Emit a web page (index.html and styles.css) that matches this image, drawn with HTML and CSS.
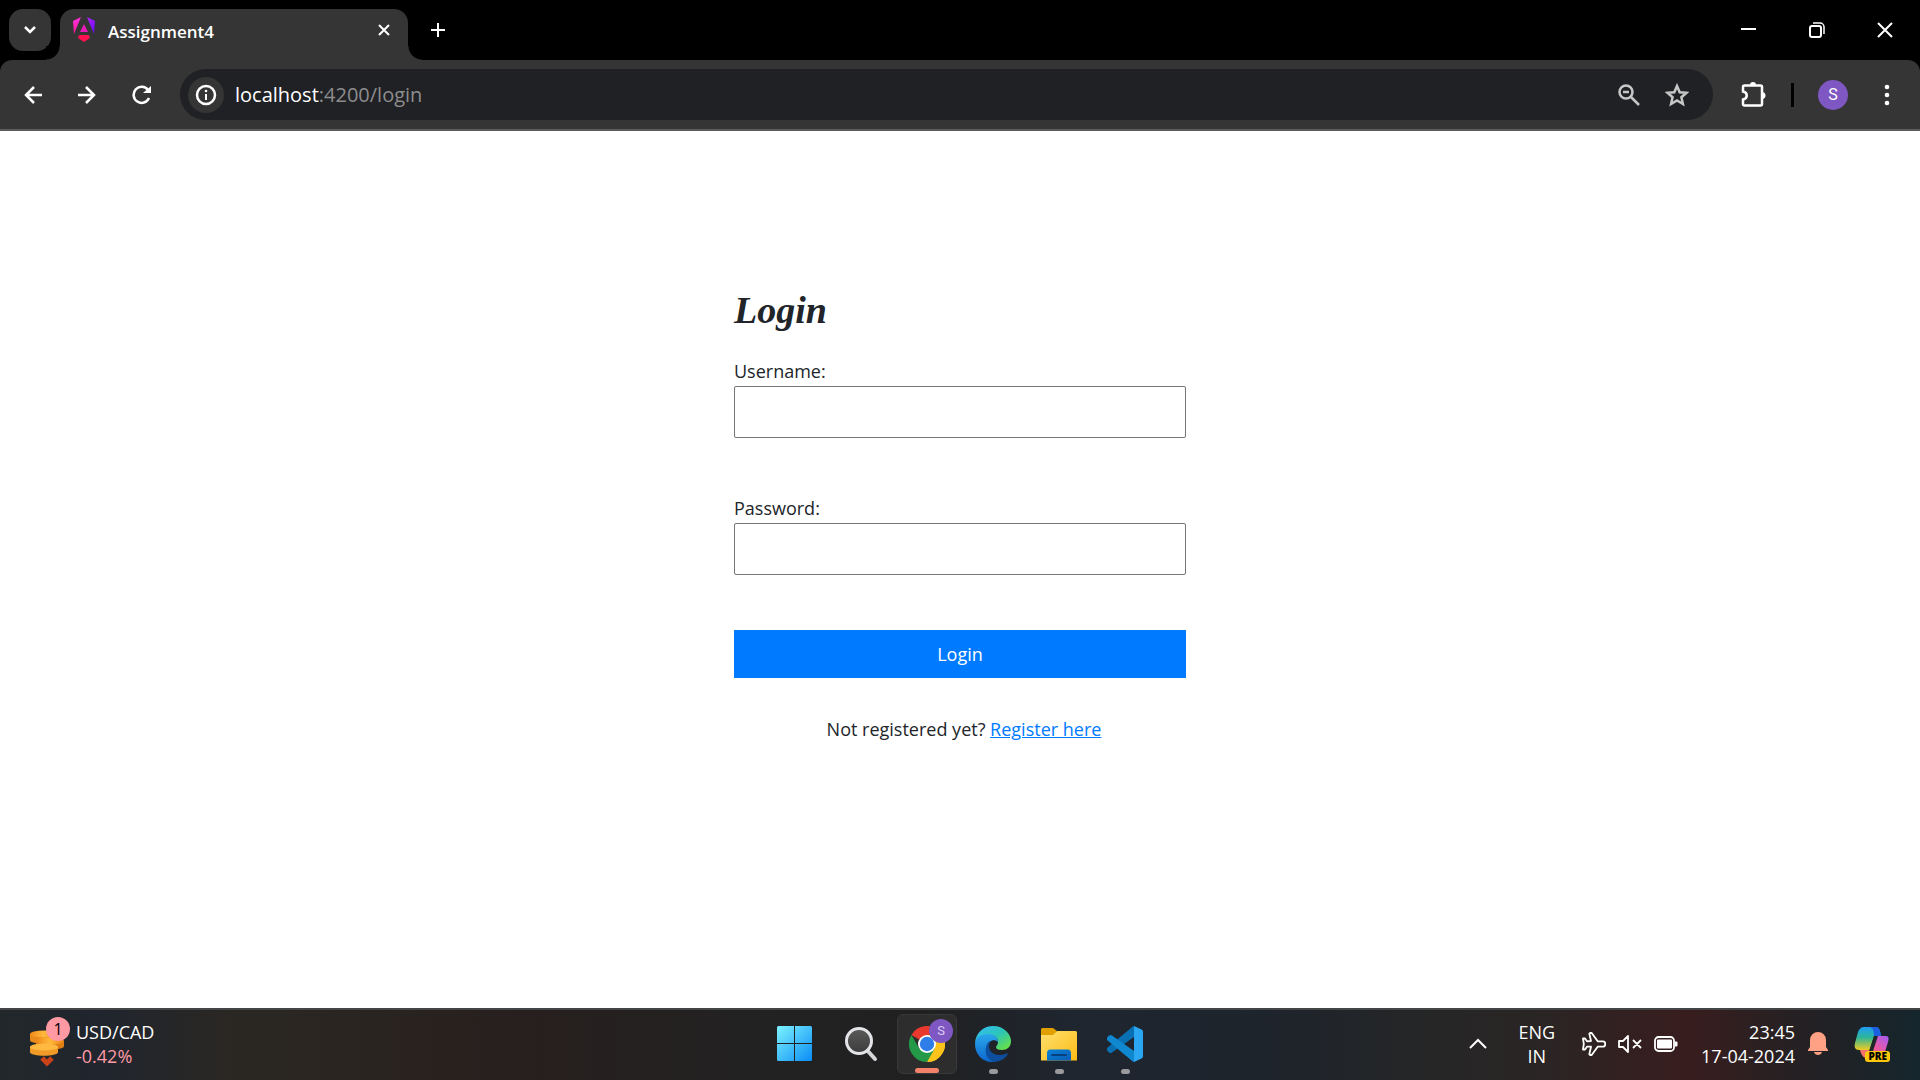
FILE: index.html
```html
<!DOCTYPE html>
<html lang="en">
<head>
<meta charset="utf-8">
<title>Assignment4</title>
<link rel="stylesheet" href="styles.css">
</head>
<body>
<svg width="0" height="0" class="defs" aria-hidden="true">
  <defs>
    <linearGradient id="ngLeft" x1="0" y1="0" x2="0" y2="1"><stop offset="0" stop-color="#ff2fe0"/><stop offset="1" stop-color="#ff1a9a"/></linearGradient>
    <linearGradient id="ngRight" x1="0" y1="0" x2="1" y2="1"><stop offset="0" stop-color="#c020ff"/><stop offset="1" stop-color="#5a0cf0"/></linearGradient>
    <linearGradient id="win" x1="0" y1="0" x2="1" y2="1"><stop offset="0" stop-color="#7df3ff"/><stop offset="1" stop-color="#0a8df5"/></linearGradient>
    <linearGradient id="lens" x1="0" y1="0" x2="0" y2="1"><stop offset="0" stop-color="#5a5a5a"/><stop offset="1" stop-color="#3c3c3c"/></linearGradient>
    <linearGradient id="edgeTop" x1="0" y1="0" x2="1" y2="1"><stop offset="0.1" stop-color="#35bdf0"/><stop offset="0.5" stop-color="#2cc5b5"/><stop offset="0.9" stop-color="#67e04a"/></linearGradient>
    <linearGradient id="edgeSide" x1="0" y1="0" x2="0" y2="1"><stop offset="0" stop-color="#2aa8ec"/><stop offset="1" stop-color="#0c66cc"/></linearGradient>
    <linearGradient id="folder" x1="0" y1="0" x2="1" y2="1"><stop offset="0" stop-color="#ffdf70"/><stop offset="1" stop-color="#fbbc14"/></linearGradient>
    <linearGradient id="dock" x1="0" y1="0" x2="1" y2="1"><stop offset="0" stop-color="#0a84d8"/><stop offset="1" stop-color="#0a5cb4"/></linearGradient>
    <linearGradient id="coin" x1="0" y1="0" x2="1" y2="0"><stop offset="0" stop-color="#f08a18"/><stop offset="0.5" stop-color="#ffb83c"/><stop offset="1" stop-color="#e88416"/></linearGradient>
    <linearGradient id="copA" x1="0" y1="0" x2="0" y2="1"><stop offset="0" stop-color="#1f9cf5"/><stop offset="0.45" stop-color="#2cb59a"/><stop offset="1" stop-color="#f0cc20"/></linearGradient>
    <linearGradient id="copB" x1="1" y1="0" x2="0" y2="1"><stop offset="0" stop-color="#a45cf5"/><stop offset="0.5" stop-color="#ee5aa0"/><stop offset="1" stop-color="#ff7a50"/></linearGradient>
  </defs>
</svg>

<header class="tabstrip">
  <button class="tab-search" aria-label="Search tabs"><svg width="14" height="10" viewBox="0 0 14 10"><path d="M2 2l5 5 5-5" class="ln w25"/></svg></button>
  <div class="tab">
    <svg width="24" height="26" viewBox="0 0 24 26">
      <path d="M1 4L9 0 2 17z" fill="url(#ngLeft)"/><path d="M23 4L15 0l7 17z" fill="url(#ngRight)"/>
      <path d="M12 7l4 8H8z" fill="#e81ab8"/><path d="M7 18h10l1 3-6 4-6-4z" fill="#ff1050"/>
    </svg>
    <span class="tab-title">Assignment4</span>
    <button class="icon-btn" aria-label="Close tab"><svg width="14" height="14" viewBox="0 0 14 14"><path d="M2 2l10 10M12 2L2 12" class="ln w2"/></svg></button>
  </div>
  <button class="icon-btn new-tab" aria-label="New tab"><svg width="16" height="16" viewBox="0 0 16 16"><path d="M8 1v14M1 8h14" class="ln w2"/></svg></button>
  <div class="window-controls">
    <button class="icon-btn" aria-label="Minimise"><svg width="16" height="16" viewBox="0 0 16 16"><path d="M0 7h15" class="ln w2"/></svg></button>
    <button class="icon-btn" aria-label="Restore"><svg width="16" height="16" viewBox="0 0 16 16"><rect x="1" y="4" width="11" height="11" rx="2" class="ln w2"/><path d="M4 1h7a4 4 0 0 1 4 4v7" class="ln w1"/></svg></button>
    <button class="icon-btn" aria-label="Close"><svg width="16" height="16" viewBox="0 0 16 16"><path d="M1 1l14 14M15 1L1 15" class="ln w2"/></svg></button>
  </div>
</header>

<nav class="toolbar">
  <button class="icon-btn" aria-label="Back"><svg width="18" height="18" viewBox="0 0 18 18"><path d="M18 9H2M10 1L2 9l8 8" class="ln w25"/></svg></button>
  <button class="icon-btn" aria-label="Forward"><svg width="18" height="18" viewBox="0 0 18 18"><path d="M0 9h16M8 1l8 8-8 8" class="ln w25"/></svg></button>
  <button class="icon-btn" aria-label="Reload"><svg width="20" height="20" viewBox="0 0 20 20"><path d="M17 13a8 8 0 1 1-1-8l2 2" class="ln w25"/><path d="M19 1v7h-8z" fill="#fff"/></svg></button>
  <div class="address">
    <button class="site-info" aria-label="Site information"><svg width="22" height="22" viewBox="0 0 22 22"><circle cx="11" cy="11" r="9" class="ln w25"/><path d="M11 10v6" class="ln w2"/><circle cx="11" cy="7" r="1.3" fill="#fff"/></svg></button>
    <div class="url"><span class="host">localhost</span>:4200/login</div>
    <button class="icon-btn" aria-label="Zoom"><svg width="22" height="22" viewBox="0 0 22 22"><circle cx="8" cy="8" r="6.5" class="ln w25 grey"/><path d="M5 8h6M13 13l8 8" class="ln w25 grey"/></svg></button>
    <button class="icon-btn" aria-label="Bookmark"><svg width="24" height="24" viewBox="0 0 24 24"><path d="M12 3l2.700 6.200 6.800.6-5.100 4.500 1.500 6.700-5.900-3.500L6.100 21l1.500-6.700-5.100-4.500 6.800-.6z" class="ln w25 grey"/></svg></button>
  </div>
  <button class="icon-btn" aria-label="Extensions"><svg width="26" height="26" viewBox="0 0 26 26"><path d="M3.500 3.500h16a1.500 1.500 0 0 1 1.500 1.500v17a1.500 1.500 0 0 1-1.500 1.500h-16A1.500 1.500 0 0 1 2 22v-4.500c5-1 5-7 0-8V5a1.500 1.500 0 0 1 1.500-1.500z" class="ln w25"/><path d="M9 3a3 3 0 0 1 6 0zM21 10a3 3 0 0 1 0 7z" fill="#fff"/></svg></button>
  <span class="divider"></span>
  <button class="avatar" aria-label="Profile">S</button>
  <button class="icon-btn" aria-label="Menu"><svg width="6" height="22" viewBox="0 0 6 22"><g fill="#fff"><circle cx="3" cy="3" r="2.300"/><circle cx="3" cy="11" r="2.300"/><circle cx="3" cy="19" r="2.300"/></g></svg></button>
</nav>

<main class="page">
  <form class="login">
    <h1>Login</h1>
    <div class="field"><label for="user">Username:</label><input id="user" type="text"></div>
    <div class="field"><label for="pass">Password:</label><input id="pass" type="password"></div>
    <button class="submit" type="button">Login</button>
    <p class="register">Not registered yet? <a href="#register">Register here</a></p>
  </form>
</main>

<footer class="taskbar">
  <button class="widget" aria-label="Widgets">
    <span class="coins">
      <svg width="40" height="46" viewBox="0 0 40 46">
        <path d="M0 13v6c0 5 28 5 28 0v-6z" fill="#e88a1c"/><ellipse cx="14" cy="13" rx="14" ry="3.500" fill="url(#coin)"/>
        <path d="M6 20v5c0 5 28 5 28 0v-5z" fill="#e07c14"/><ellipse cx="20" cy="20" rx="14" ry="3.500" fill="url(#coin)"/>
        <path d="M0 26v5c0 5 28 5 28 0v-5z" fill="#f09a28"/><ellipse cx="14" cy="26" rx="14" ry="3.500" fill="#ffb840"/>
        <path d="M12 37l5 5 5-5" fill="none" stroke="#c9421a" stroke-width="5"/>
      </svg>
      <span class="badge">1</span>
    </span>
    <span class="quote"><span>USD/CAD</span><span class="down">-0.42%</span></span>
  </button>

  <div class="apps">
    <button class="app" aria-label="Start"><svg width="36" height="36" viewBox="0 0 36 36"><path d="M1.500 0H17v17H0V1.500A1.500 1.500 0 0 1 1.500 0zM18 0h15.500A1.500 1.500 0 0 1 35 1.500V17H18zM0 18h17v17H1.500A1.500 1.500 0 0 1 0 33.500zM18 18h17v15.500a1.500 1.500 0 0 1-1.500 1.500H18z" fill="url(#win)"/></svg></button>
    <button class="app" aria-label="Search"><svg width="36" height="36" viewBox="0 0 36 36"><path d="M23 23l9 10" stroke="#d4d6da" stroke-width="4" stroke-linecap="round"/><circle cx="16" cy="15" r="12.500" fill="url(#lens)" stroke="#e2e4e8" stroke-width="3"/></svg></button>
    <button class="app active" aria-label="Chrome">
      <svg width="36" height="36" viewBox="0 0 36 36">
        <path d="M18 18L2.400 9A18 18 0 0 1 33.600 9z" fill="#e8392c"/><path d="M18 18L33.600 9A18 18 0 0 1 18 36l4-13z" fill="#fcc31a"/><path d="M18 9h15.600A18 18 0 0 1 18 36l7.800-13.500z" fill="#fcc31a"/><path d="M18 36A18 18 0 0 1 2.400 9l7.800 13.500L18 27l7.800-4.500z" fill="#249a48"/><circle cx="18" cy="18" r="9" fill="#fff"/><circle cx="18" cy="18" r="7.200" fill="#2f7de9"/>
      </svg>
      <span class="profile-badge">S</span>
    </button>
    <button class="app open" aria-label="Edge">
      <svg width="36" height="36" viewBox="0 0 36 36">
        <path d="M0 17C1 6 9 0 18 0c11 0 18 8 18 15 0 6-4 9-9 9-4 0-6-1-6-3 0-1 2-2 2-5 0-4-3-7-8-7C7 9 1 13 0 17z" fill="url(#edgeTop)"/>
        <path d="M0 18C0 12 6 8 13 8c7 0 10 4 10 8-4-4-10-1-10 5 0 6 5 11 11 12-3 2-5 3-7 3C7 36 0 28 0 18z" fill="url(#edgeSide)"/>
        <path d="M15 15c-6 3-7 19 5 21 7-1 12-5 13-9-8 4-19 2-19-7z" fill="#0d4f9e"/>
      </svg>
    </button>
    <button class="app open" aria-label="File Explorer">
      <svg width="36" height="36" viewBox="0 0 36 36"><path d="M0 3.500A1.500 1.500 0 0 1 1.500 2H12l4 3-3 4H0z" fill="#e0a000"/><path d="M0 9h12l4-4h18.500A1.500 1.500 0 0 1 36 6.500V34.500H0z" fill="url(#folder)"/><path d="M6 34.500V27a3.500 3.500 0 0 1 3.500-3.500h17A3.500 3.500 0 0 1 30 27v7.500z" fill="url(#dock)"/><path d="M11 29h14" stroke="#06407f" stroke-width="2" stroke-linecap="round"/></svg>
    </button>
    <button class="app open" aria-label="Visual Studio Code">
      <svg width="36" height="36" viewBox="0 0 36 36"><path d="M27 0v11L5 26.500a2.500 2.500 0 0 1-3 0L.6 25a2.500 2.500 0 0 1 0-3.500L25.500.7z" fill="#0a70b4"/><path d="M27 36V25L5 9.500a2.500 2.500 0 0 0-3 0L.6 11a2.500 2.500 0 0 0 0 3.500l24.900 20.800z" fill="#1088cf"/><path d="M27 0l7.500 3.500A2.500 2.500 0 0 1 36 6v24a2.500 2.500 0 0 1-1.500 2.500L27 36z" fill="#2aa6f2"/></svg>
    </button>
  </div>

  <div class="tray">
    <button class="icon-btn" aria-label="Hidden icons"><svg width="18" height="12" viewBox="0 0 18 12"><path d="M1 10l8-8 8 8" class="ln w2"/></svg></button>
    <button class="lang">ENG<br>IN</button>
    <button class="status" aria-label="Network, sound, battery">
      <svg width="24" height="24" viewBox="0 0 24 24"><path d="M9 9L7.500 2.500A1 1 0 0 1 8.500 1h1.200l6 8.300H21c3 0 3 5.400 0 5.400h-5.300L9.700 23H8.500a1 1 0 0 1-1-1.500L9 14.700H5L3 17.500H1l.8-5.500L1 6.500h2L5 9.300z" class="ln w15"/></svg>
      <svg width="24" height="18" viewBox="0 0 24 18"><path d="M1 6h4l5-5v16l-5-5H1zM15 5l8 8M23 5l-8 8" class="ln w15"/></svg>
      <svg width="24" height="16" viewBox="0 0 24 16"><rect x="1" y="1" width="19" height="14" rx="3.500" class="ln w15"/><rect x="3" y="3.500" width="15" height="9" rx="1" fill="#fff"/><path d="M21 5.500h1.500a1 1 0 0 1 1 1v3a1 1 0 0 1-1 1H21z" fill="#fff"/></svg>
    </button>
    <button class="clock">23:45<br>17-04-2024</button>
    <button class="icon-btn" aria-label="Notifications"><svg width="20" height="24" viewBox="0 0 20 24"><path d="M10 0a8 8 0 0 1 8 8v7l2 3v1H0v-1l2-3V8a8 8 0 0 1 8-8zM6 20h8c-1 4-7 4-8 0z" fill="#ffa184"/></svg></button>
    <button class="copilot" aria-label="Copilot">
      <svg width="36" height="34" viewBox="0 0 36 34"><path d="M10 0h12c3 0 4 3 5 9h-7l-4 14H5c-4 0-5-3-4-7L4 5c1-3 3-5 6-5z" fill="url(#copA)"/><path d="M16 0h6c3 0 4 3 5 9h-7c0-5-1-8-4-9z" fill="#1d5fe0"/><path d="M21 9h11c3 0 3 3 2 6l-3 10c-1 3-3 6-7 6H12c-3 0-5-4-6-8h10c2 0 3-2 4-6z" fill="url(#copB)"/><path d="M20 9h4l-5 15h-4z" fill="#20272b"/></svg>
      <span class="pre">PRE</span>
    </button>
  </div>
</footer>
</body>
</html>
```
FILE: styles.css
```css
* { box-sizing: border-box; }

body {
  margin: 0;
  min-height: 100vh;
  display: flex;
  flex-direction: column;
  background: #000;
  color: #212529;
  font-family: "Open Sans", "Noto Sans", sans-serif;
  font-size: 18px;
}

button {
  margin: 0;
  padding: 0;
  border: 0;
  background: none;
  color: #fff;
  font: inherit;
}

svg { display: block; flex: none; }
.defs { position: absolute; }

/* icon strokes */
.ln { fill: none; stroke: #fff; }
.ln.grey { stroke: #c7c7c7; }
.w1 { stroke-width: 1.5; }
.w15 { stroke-width: 1.8; stroke-linejoin: round; }
.w2 { stroke-width: 2; }
.w25 { stroke-width: 2.5; }

.icon-btn { display: grid; place-items: center; }

/* tab strip */
.tabstrip {
  display: flex;
  height: 60px;
  padding: 9px 27px 0 9px;
  color: #fff;
}

.tab-search {
  display: grid;
  place-items: center;
  width: 42px;
  height: 42px;
  border-radius: 14px;
  background: #353535;
}

.tab {
  position: relative;
  display: flex;
  align-items: center;
  width: 348px;
  margin-left: 9px;
  padding: 0 17px 10px 12px;
  border-radius: 14px 14px 0 0;
  background: #353535;
}

/* flared feet of the active tab */
.tab::before,
.tab::after {
  content: "";
  position: absolute;
  bottom: 0;
  width: 14px;
  height: 14px;
}
.tab::before { right: 100%; background: radial-gradient(circle at 0 0, #000 13px, #353535 14px); }
.tab::after { left: 100%; background: radial-gradient(circle at 100% 0, #000 13px, #353535 14px); }

.tab-title {
  flex: 1;
  margin-left: 12px;
  padding-top: 4px;
  font-size: 17px;
  font-weight: 600;
}

.new-tab { width: 60px; height: 42px; }

.window-controls {
  display: flex;
  gap: 52px;
  height: 42px;
  margin-left: auto;
}

/* toolbar */
.toolbar {
  display: flex;
  align-items: center;
  height: 71px;
  padding: 0 30px 0 24px;
  border-bottom: 2px solid #5c5c5c;
  border-radius: 12px 12px 0 0;
  background: #353535;
}

.toolbar > .icon-btn + .icon-btn { margin-left: 36px; }

.address {
  flex: 1;
  display: flex;
  align-items: center;
  gap: 25px;
  height: 51px;
  margin: 0 28px;
  padding: 0 24px 0 8px;
  border-radius: 26px;
  background: #202125;
}

.site-info {
  display: grid;
  place-items: center;
  width: 36px;
  height: 36px;
  border-radius: 50%;
  background: #353535;
}

.url {
  flex: 1;
  margin-left: -14px;
  color: #8d8d8d;
  font-size: 20px;
}
.host { color: #fff; }

.divider {
  width: 3px;
  height: 24px;
  margin: 0 24px;
  background: #000;
}

.avatar {
  width: 30px;
  height: 30px;
  margin-right: 36px;
  border-radius: 50%;
  background: #7e57c2;
  font: 16px/30px Roboto, sans-serif;
}

/* login page */
.page {
  flex: 1;
  display: flex;
  justify-content: center;
  padding: 152px 20px 0;
  background: #fff;
}

.login { width: 452px; }

.login h1 {
  margin: 0 0 18px;
  font: italic bold 38px/55px "Liberation Serif", serif;
}

.field {
  display: flex;
  flex-direction: column;
  margin-bottom: 55px;
}

.field label { line-height: 30px; }

.field input {
  height: 52px;
  padding: 10px;
  border: 1px solid #767676;
  border-radius: 2px;
  background: #fff;
  font: inherit;
}

.submit {
  display: block;
  width: 100%;
  height: 48px;
  background: #007bff;
}

.register {
  margin: 36px 0 0;
  padding-left: 8px;
  line-height: 30px;
  text-align: center;
}
.register a { color: #007bff; }

/* taskbar */
.taskbar {
  display: grid;
  grid-template-columns: 1fr auto 1fr;
  align-items: center;
  height: 72px;
  padding: 0 30px 2px;
  border-top: 2px solid #444546;
  background: linear-gradient(90deg, #22282a 0, #20252e 5%, #2a2723 12%, #2a2420 20%, #261f1e 28%, #222 40%, #202020 48%, #1f2630 56%, #1e242c 66%, #262626 75%, #2a2525 80%, #391d1e 88%, #2a2022 92%, #1f2226 96%, #14262c 100%);
  color: #fff;
}

.widget {
  display: flex;
  align-items: center;
  gap: 6px;
  text-align: left;
}

.coins { position: relative; }

.badge {
  position: absolute;
  top: -4px;
  left: 16px;
  width: 24px;
  height: 24px;
  border-radius: 50%;
  background: #ff99a4;
  color: #000;
  font-size: 16px;
  line-height: 24px;
  text-align: center;
}

.quote {
  display: flex;
  flex-direction: column;
  font-size: 18px;
  line-height: 24px;
}
.down { color: #ff99a4; }

.apps { display: flex; gap: 6px; }

.app {
  position: relative;
  display: grid;
  place-items: center;
  width: 60px;
  height: 60px;
  border-radius: 6px;
}
.app.active { border: 1px solid #393939; background: #2d2d2d; }

.app.open::after,
.app.active::after {
  content: "";
  position: absolute;
  bottom: 0;
  width: 9px;
  height: 5px;
  border-radius: 3px;
  background: #9a9a9d;
}
.app.active::after { width: 24px; background: #f4826a; }

.profile-badge {
  position: absolute;
  top: 4px;
  right: 3px;
  width: 24px;
  height: 24px;
  border-radius: 50%;
  background: #7e57c2;
  color: #d8cbee;
  font: 13px/24px Roboto, sans-serif;
}

.tray {
  display: flex;
  align-items: center;
  justify-content: flex-end;
}

.lang, .clock {
  font-size: 18px;
  line-height: 24px;
}
.lang { margin: 0 27px 0 31px; }
.clock { margin: 0 13px 0 23px; text-align: right; }

.status {
  display: flex;
  align-items: center;
  gap: 12px;
}

.copilot {
  position: relative;
  margin-left: 26px;
}

.pre {
  position: absolute;
  right: 0;
  bottom: -1px;
  padding: 0 3px;
  border-radius: 3px;
  background: #ffc80a;
  color: #000;
  font-size: 10px;
  font-weight: 800;
  line-height: 11px;
}
```
